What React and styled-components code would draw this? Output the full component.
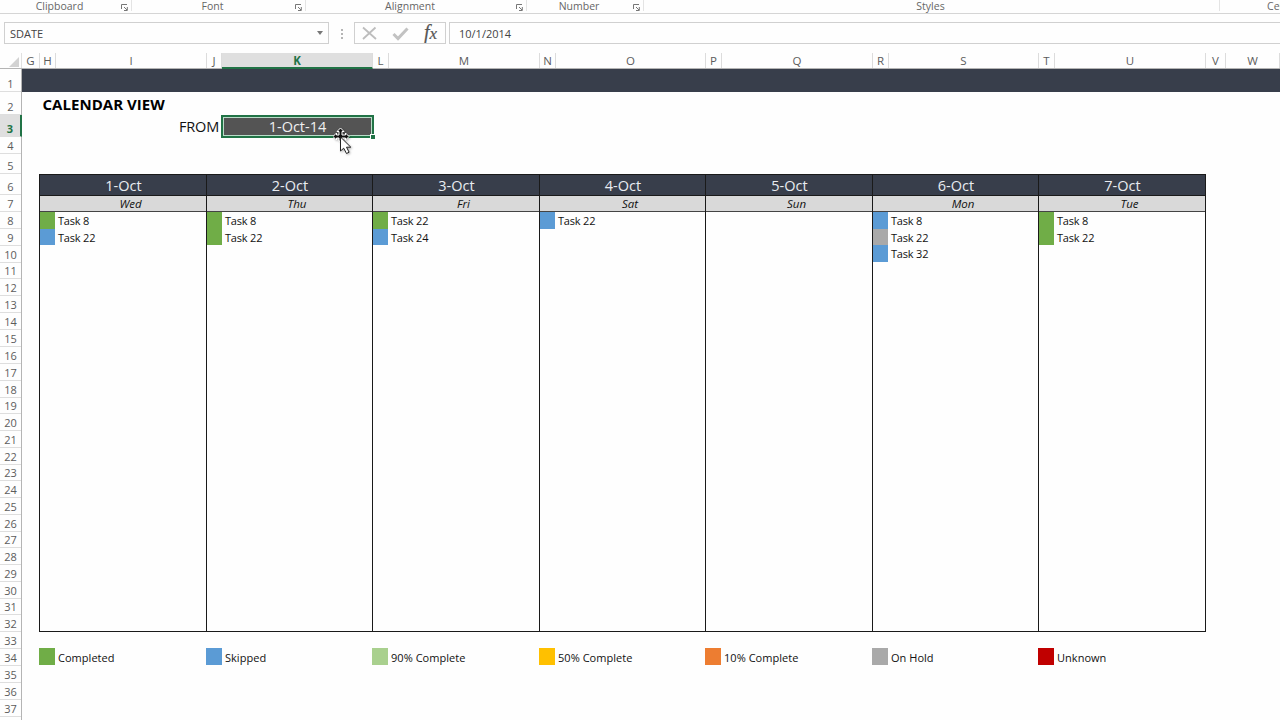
import React from "react";
import styled, { createGlobalStyle } from "styled-components";

const GlobalStyle = createGlobalStyle`
  * {
    box-sizing: border-box;
  }

  body {
    margin: 0;
    background: #fefefe;
    overflow: hidden;
    font-family: "Open Sans", "Noto Sans", sans-serif;
  }
`;

const colors = {
  navy: "#383e4b",
  excel: "#217346",
  done: "#70ad47",
  skipped: "#5b9bd5",
  ninety: "#a9d08e",
  fifty: "#ffc000",
  ten: "#ed7d31",
  hold: "#a9a9a9",
  unknown: "#c00000",
};

const columns = [
  ["G", 18],
  ["H", 16],
  ["I", 151],
  ["J", 15],
  ["K", 151],
  ["L", 16],
  ["M", 151],
  ["N", 16],
  ["O", 150],
  ["P", 16],
  ["Q", 151],
  ["R", 16],
  ["S", 150],
  ["T", 16],
  ["U", 151],
  ["V", 20],
  ["W", 54],
];

const rowEnds = [
  92, 115, 137, 154, 174, 195, 212, 229, 246, 263, 279, 296, 313, 330, 347, 364,
  381, 398, 414, 431, 448, 465, 481, 498, 515, 532, 548, 565, 582, 599, 615,
  632, 649, 666, 683, 700, 717,
];

const days = [
  { date: "1-Oct", name: "Wed", tasks: [["Task 8", "done"], ["Task 22", "skipped"]] },
  { date: "2-Oct", name: "Thu", tasks: [["Task 8", "done"], ["Task 22", "done"]] },
  { date: "3-Oct", name: "Fri", tasks: [["Task 22", "done"], ["Task 24", "skipped"]] },
  { date: "4-Oct", name: "Sat", tasks: [["Task 22", "skipped"]] },
  { date: "5-Oct", name: "Sun", tasks: [] },
  {
    date: "6-Oct",
    name: "Mon",
    tasks: [["Task 8", "skipped"], ["Task 22", "hold"], ["Task 32", "skipped"]],
  },
  { date: "7-Oct", name: "Tue", tasks: [["Task 8", "done"], ["Task 22", "done"]] },
];

const legend = [
  ["Completed", "done"],
  ["Skipped", "skipped"],
  ["90% Complete", "ninety"],
  ["50% Complete", "fifty"],
  ["10% Complete", "ten"],
  ["On Hold", "hold"],
  ["Unknown", "unknown"],
];

const Window = styled.div`
  width: 1280px;
  height: 720px;
  overflow: hidden;
  display: flex;
  flex-direction: column;
`;

const Ribbon = styled.div`
  height: 14px;
  flex: none;
  display: flex;
  border-bottom: 1px solid #d5d5d5;
`;

const RibbonGroup = styled.div`
  width: ${({ $width }) => $width}px;
  flex: none;
  height: 11px;
  display: flex;
  border-right: 1px solid #e4e4e4;
  color: #666;
  font-size: 10.5px;
  line-height: 13px;
  white-space: nowrap;
`;

const GroupLabel = styled.span`
  flex: 1;
  text-align: center;
  padding-right: 2px;
`;

const LauncherIcon = styled.svg`
  width: 7px;
  height: 7px;
  margin: 4px 3px 0 0;
  flex: none;
`;

const FormulaBar = styled.div`
  height: 39px;
  flex: none;
  display: flex;
  padding: 8px 0 0 4px;
  font-size: 12px;
  line-height: 22px;
  color: #444;
`;

const NameBox = styled.div`
  width: 325px;
  height: 22px;
  border: 1px solid #d0d0d0;
  display: flex;
  align-items: center;
  justify-content: space-between;
  padding: 1px 5px 0 5px;
  font-size: 11px;
`;

const DropArrow = styled.i`
  border: 3.5px solid transparent;
  border-top: 4px solid #777;
  border-bottom: 0;
  margin-top: -2px;
`;

const Grip = styled.div`
  width: 25px;
  display: flex;
  flex-direction: column;
  align-items: center;
  gap: 2px;
  padding-top: 7px;
  height: 22px;

  i {
    width: 2px;
    height: 2px;
    background: #b5b5b5;
  }
`;

const EditButtons = styled.div`
  width: 92px;
  height: 22px;
  border: 1px solid #d0d0d0;
  margin-right: 3px;
`;

const FormulaInput = styled.div`
  flex: 1;
  height: 22px;
  border: 1px solid #d0d0d0;
  border-right: 0;
  padding-left: 9px;
  font-size: 11px;
  line-height: 21px;
`;

const ColumnHeads = styled.div`
  height: 16px;
  flex: none;
  display: flex;
  border-bottom: 1px solid #b4b4b4;
`;

const Corner = styled.div`
  width: 22px;
  border-right: 1px solid #e0e0e0;
  flex: none;

  svg {
    display: block;
    margin: 4px 0 0 9px;
  }
`;

const ColumnHead = styled.div`
  width: ${({ $width }) => $width}px;
  flex: none;
  height: ${({ $active }) => ($active ? 16 : 15)}px;
  display: flex;
  justify-content: center;
  font-size: 11.5px;
  line-height: 16px;
  color: ${({ $active }) => ($active ? colors.excel : "#5c5c5c")};
  font-weight: ${({ $active }) => ($active ? 700 : 400)};
  background: ${({ $active }) => ($active ? "#dfdfdf" : "transparent")};
  border-right: 1px solid #dcdcdc;
  border-bottom: ${({ $active }) => ($active ? `2px solid ${colors.excel}` : 0)};
`;

const Body = styled.div`
  display: flex;
  flex: 1;
`;

const RowHeads = styled.div`
  width: 22px;
  flex: none;
  border-right: 1px solid #b4b4b4;
`;

const RowHead = styled.div`
  height: ${({ $height }) => $height}px;
  display: flex;
  align-items: flex-end;
  justify-content: center;
  font-size: 11px;
  line-height: 15px;
  border-bottom: 1px solid #dedede;
  color: ${({ $active }) => ($active ? colors.excel : "#5c5c5c")};
  font-weight: ${({ $active }) => ($active ? 700 : 400)};
  background: ${({ $active }) => ($active ? "#dfdfdf" : "transparent")};
  border-right: ${({ $active }) => ($active ? `2px solid ${colors.excel}` : 0)};
  margin-right: ${({ $active }) => ($active ? -1 : 0)}px;
`;

const Sheet = styled.div`
  flex: 1;
  color: #111;
`;

const Banner = styled.div`
  height: 23px;
  background: ${colors.navy};
`;

const Title = styled.div`
  height: 23px;
  padding-left: 20.5px;
  font-weight: 700;
  font-size: 15px;
  line-height: 25px;
  letter-spacing: 0.03px;
  color: #000;
`;

const FromRow = styled.div`
  height: 22px;
  margin-bottom: 37px;
  display: flex;
  font-size: 14.5px;
  line-height: 24px;
`;

const FromLabel = styled.div`
  width: 199px;
  padding-right: 2px;
  text-align: right;
  letter-spacing: -0.2px;
`;

const SelectedCell = styled.div`
  position: relative;
  width: 153px;
  height: 23px;
  border: 2px solid ${colors.excel};
  box-shadow: inset 0 0 0 1px #b9dcc8;
  background: #545454;
  color: #f0f0f0;
  text-align: center;
  line-height: 20px;
`;

const FillHandle = styled.i`
  position: absolute;
  right: -3px;
  bottom: -3px;
  width: 5px;
  height: 5px;
  background: ${colors.excel};
  border-top: 1px solid #fff;
  border-left: 1px solid #fff;
`;

const Pointer = styled.svg`
  position: absolute;
  left: 110px;
  top: 11px;
  width: 20px;
  height: 28px;
  filter: drop-shadow(1px 1px 1px rgba(0, 0, 0, 0.3));
`;

const Calendar = styled.div`
  display: grid;
  grid-template-columns: 167px 166px 167px 166px 167px 166px 167px;
  width: 1167px;
  height: 458px;
  margin-left: 17px;
  border: solid #1a1a1a;
  border-width: 1px 1px 1px 0;
`;

const Day = styled.div`
  border-left: 1px solid #1a1a1a;
`;

const DayDate = styled.div`
  height: 21px;
  padding-left: 1px;
  background: ${colors.navy};
  border-bottom: 1px solid #1a1a1a;
  color: #e9ecf1;
  font-size: 14.5px;
  line-height: 22px;
  text-align: center;
`;

const DayName = styled.div`
  height: 16px;
  background: #d9d9d9;
  border-bottom: 1px solid #444;
  padding-left: 15px;
  font-size: 11.5px;
  font-style: italic;
  line-height: 15px;
  text-align: center;
`;

const Entry = styled.div`
  display: flex;
  height: ${({ $height }) => $height}px;
  font-size: 11px;
  line-height: 17px;
  letter-spacing: -0.2px;
  white-space: nowrap;
`;

const LegendEntry = styled(Entry)`
  line-height: 19px;
  letter-spacing: 0.03px;
`;

const Swatch = styled.i`
  width: ${({ $wide }) => ($wide ? 16 : 15)}px;
  flex: none;
  margin-right: 3px;
  background: ${({ $status }) => colors[$status]};
`;

const Legend = styled.div`
  display: grid;
  grid-template-columns: 167px 166px 167px 166px 167px 166px 167px;
  margin: 16px 0 0 17px;
`;

const Launcher = () => (
  <LauncherIcon viewBox="0 0 7 7" fill="none" stroke="#777">
    <path d="M.5 5V.5H6M3 3l3 3M6.3 3v3.5H3" />
  </LauncherIcon>
);

const EditIcons = () => (
  <svg width="90" height="20" viewBox="0 0 90 20" fill="none">
    <path d="M8 4.5l13 11.5M20.5 4.5L8 16" stroke="#bdbdbd" strokeWidth="1.8" />
    <path d="M38.5 11l4.5 4.5L52.5 5.5" stroke="#c2c2c2" strokeWidth="3" />
    <text
      x="69"
      y="15.5"
      fill="#555"
      stroke="#555"
      strokeWidth="0.2"
      fontFamily="Liberation Serif"
      fontStyle="italic"
      fontSize="20"
    >
      f<tspan fontSize="17">x</tspan>
    </text>
  </svg>
);

const MovePointer = () => (
  <Pointer viewBox="0 0 20 28">
    <path
      d="M7.5 0l3.5 3.5H9V7h3.5V5L16 8.5 12.500 12v-2H9v3h-3v-3H3.500v2L0 8.500 3.500 5v2H6V3.500H4z"
      fill="#111"
      stroke="#fff"
      strokeWidth="1"
    />
    <path
      d="M7.500 9v14l3.200-2.800 2.800 5.300 2.600-1.300-2.600-5h4.300z"
      fill="#fff"
      stroke="#222"
    />
  </Pointer>
);

export default function App() {
  return (
    <Window>
      <GlobalStyle />
      <Ribbon>
        <RibbonGroup $width={132}>
          <GroupLabel>Clipboard</GroupLabel>
          <Launcher />
        </RibbonGroup>
        <RibbonGroup $width={174}>
          <GroupLabel>Font</GroupLabel>
          <Launcher />
        </RibbonGroup>
        <RibbonGroup $width={221}>
          <GroupLabel>Alignment</GroupLabel>
          <Launcher />
        </RibbonGroup>
        <RibbonGroup $width={117}>
          <GroupLabel>Number</GroupLabel>
          <Launcher />
        </RibbonGroup>
        <RibbonGroup $width={576}>
          <GroupLabel>Styles</GroupLabel>
        </RibbonGroup>
        <RibbonGroup $width={120}>
          <GroupLabel>Cells</GroupLabel>
        </RibbonGroup>
      </Ribbon>
      <FormulaBar>
        <NameBox>
          SDATE
          <DropArrow />
        </NameBox>
        <Grip>
          <i />
          <i />
          <i />
        </Grip>
        <EditButtons>
          <EditIcons />
        </EditButtons>
        <FormulaInput>10/1/2014</FormulaInput>
      </FormulaBar>
      <ColumnHeads>
        <Corner>
          <svg width="10" height="10">
            <path d="M10 0v10H0z" fill="#d2d2d2" />
          </svg>
        </Corner>
        {columns.map(([name, width]) => (
          <ColumnHead key={name} $width={width} $active={name === "K"}>
            {name}
          </ColumnHead>
        ))}
      </ColumnHeads>
      <Body>
        <RowHeads>
          {rowEnds.map((end, i) => (
            <RowHead
              key={end}
              $height={end - (rowEnds[i - 1] || 69)}
              $active={i === 2}
            >
              {i + 1}
            </RowHead>
          ))}
        </RowHeads>
        <Sheet>
          <Banner />
          <Title>CALENDAR VIEW</Title>
          <FromRow>
            <FromLabel>FROM</FromLabel>
            <SelectedCell>
              1-Oct-14
              <FillHandle />
              <MovePointer />
            </SelectedCell>
          </FromRow>
          <Calendar>
            {days.map(({ date, name, tasks }) => (
              <Day key={date}>
                <DayDate>{date}</DayDate>
                <DayName>{name}</DayName>
                {tasks.map(([task, status], i) => (
                  <Entry key={task} $height={i === 1 ? 16 : 17}>
                    <Swatch $status={status} />
                    {task}
                  </Entry>
                ))}
              </Day>
            ))}
          </Calendar>
          <Legend>
            {legend.map(([label, status]) => (
              <LegendEntry key={label} $height={17}>
                <Swatch $status={status} $wide />
                {label}
              </LegendEntry>
            ))}
          </Legend>
        </Sheet>
      </Body>
    </Window>
  );
}
